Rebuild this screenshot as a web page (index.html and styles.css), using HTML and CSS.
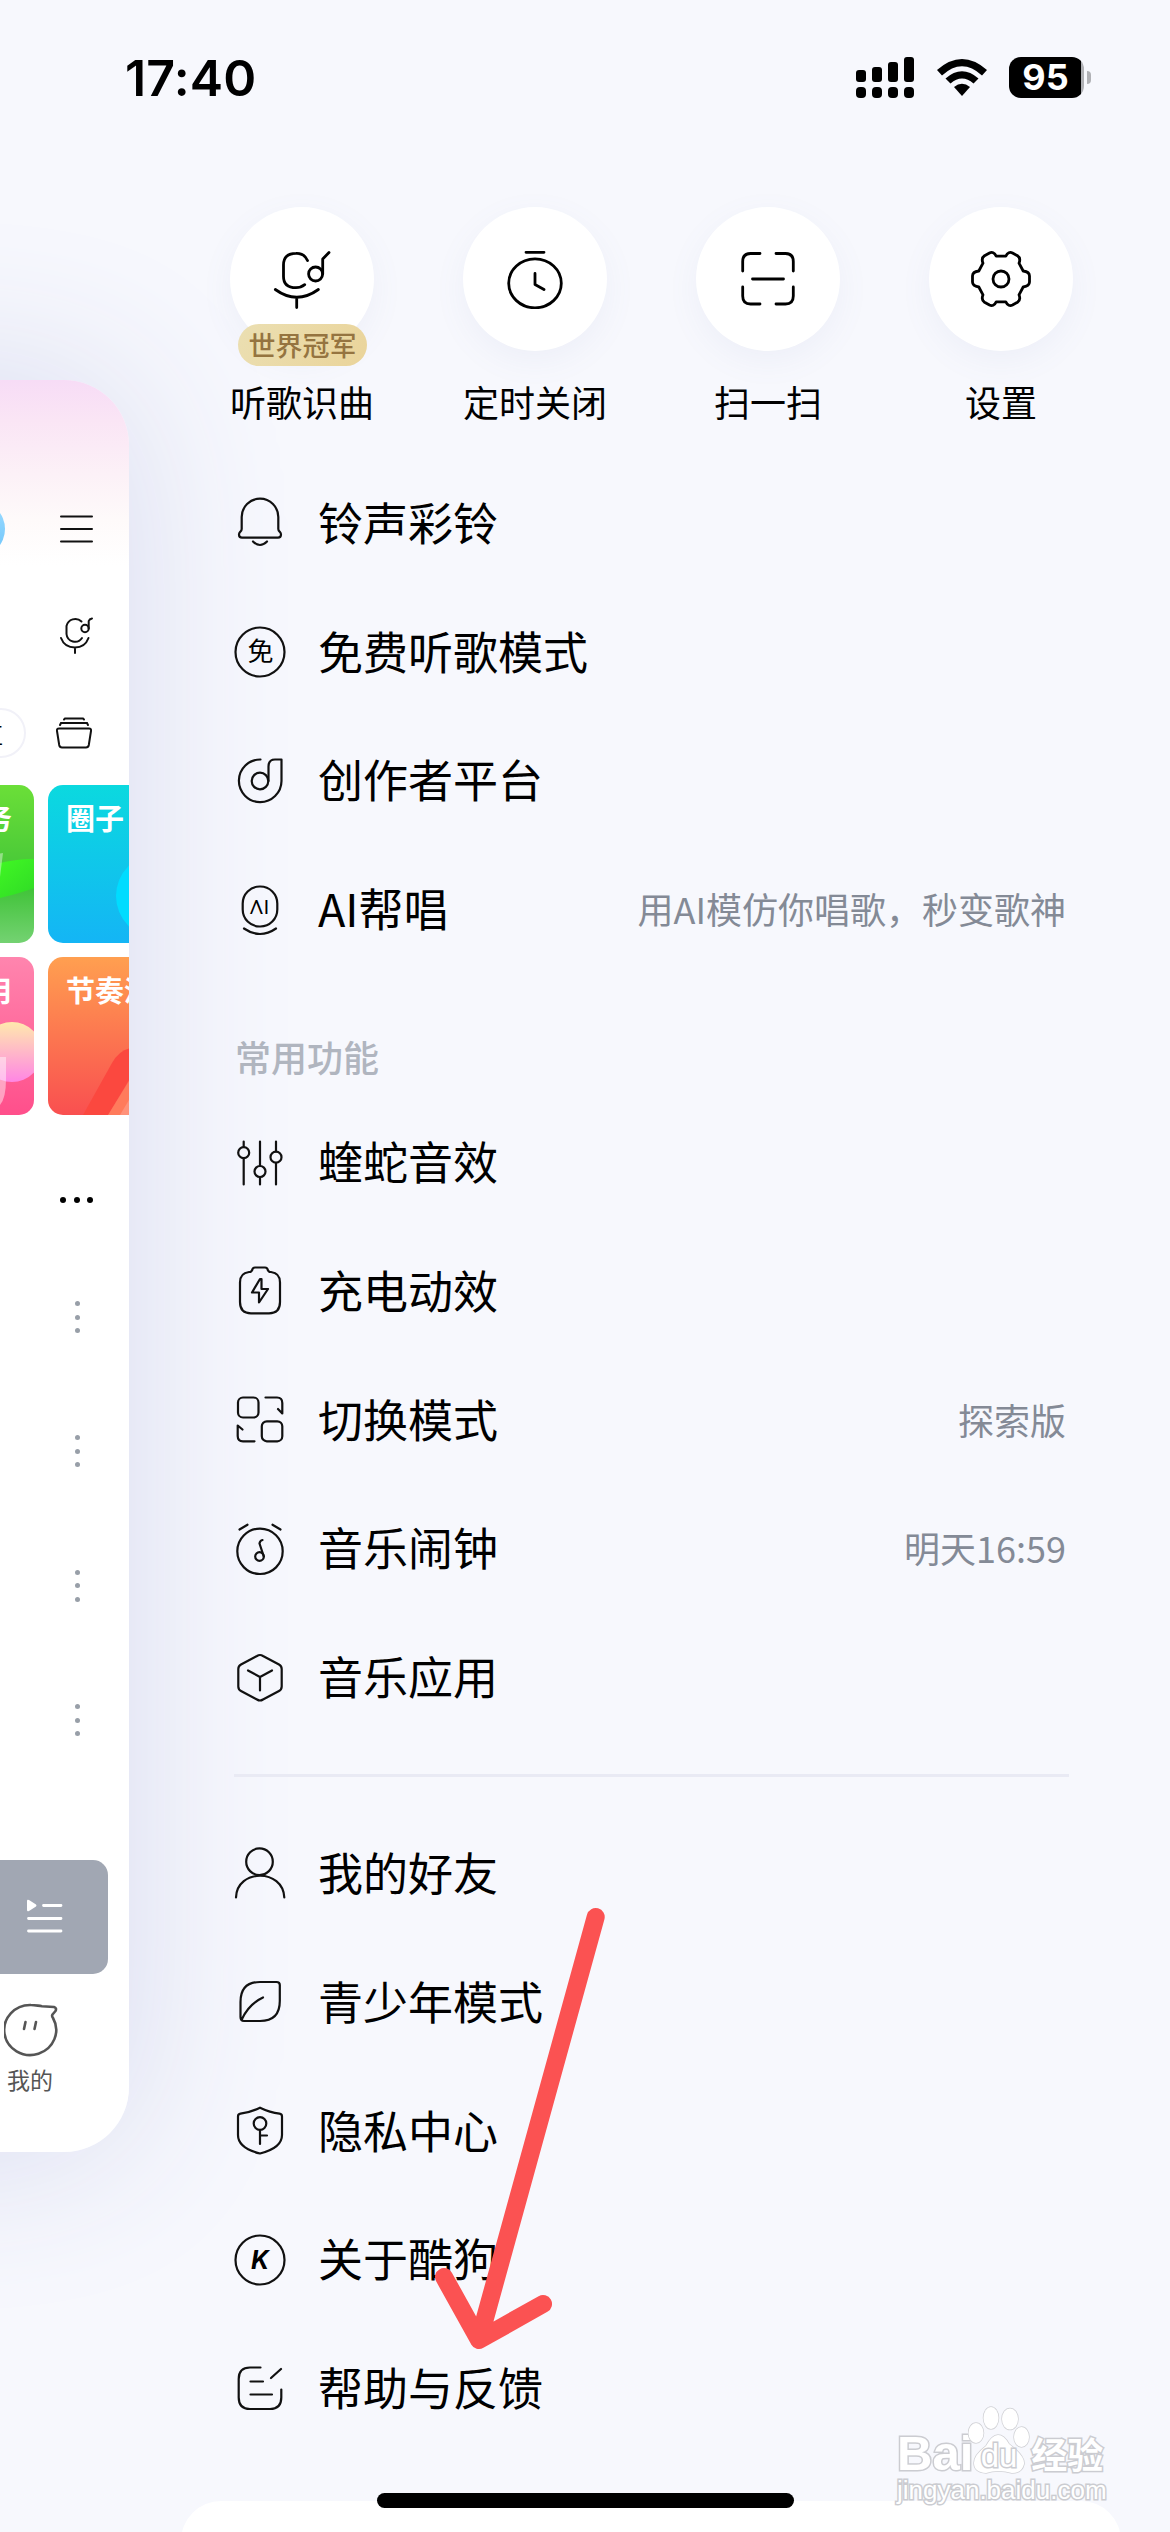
FILE: index.html
```html
<!DOCTYPE html>
<html lang="zh-CN">
<head>
    <meta charset="UTF-8">
    <meta name="viewport" content="width=device-width, initial-scale=1.0">
    <title>酷狗音乐</title>
    <link rel="stylesheet" href="styles.css">
</head>
<body>

    <div class="status-bar">
        <span class="time">17:40</span>
        <div class="status-icons">
            <svg width="58" height="41" viewBox="0 0 58 41">
                <rect x="0" y="13" width="10" height="12" rx="3"/>
                <rect x="16" y="10" width="10" height="15" rx="3"/>
                <rect x="32" y="5" width="10" height="20" rx="3"/>
                <rect x="48" y="0" width="10" height="25" rx="3"/>
                <rect x="0" y="30" width="10" height="11" rx="4"/>
                <rect x="16" y="30" width="10" height="11" rx="4"/>
                <rect x="32" y="30" width="10" height="11" rx="4"/>
                <rect x="48" y="30" width="10" height="11" rx="4"/>
            </svg>
            <svg class="wifi" width="52" height="38" viewBox="0 0 52 38">
                <path d="M1 11 Q26 -11 51 11 L46 16.5 Q26 -2 6 16.5 Z"/>
                <path d="M9.5 19.5 Q26 5 42.5 19.5 L37.5 24.5 Q26 14.5 14.5 24.5 Z"/>
                <path d="M18 28 Q26 21.5 34 28 L26 37 Z"/>
            </svg>
            <div class="battery"><span>95</span></div>
            <div class="battery-cap"></div>
        </div>
    </div>

    <div class="screen">
        <!-- main page pushed to the left -->
        <div class="page">
            <div class="page-header">
                <div class="avatar"></div>
                <svg width="34" height="28" viewBox="0 0 34 28" class="line">
                    <path d="M1 1.5H32 M1 14H32 M1 26.5H32"/>
                </svg>
            </div>
            <div class="page-search">
                <svg width="36" height="40" viewBox="0 0 36 40" class="line">
                    <path d="M23.5 6.5 A9 9 0 0 0 8.5 11 V19 A8.5 8.5 0 0 0 24 23"/>
                    <circle cx="27" cy="13.5" r="3.7"/>
                    <path d="M30.7 13.5 V6 Q31.5 4 34 3.5"/>
                    <path d="M3 23 Q6.5 32.5 17 32.5 Q27 32.5 30.5 23 M17 32.5 V38"/>
                </svg>
            </div>
            <div class="page-tabs">
                <div class="pill">区</div>
                <svg width="38" height="34" viewBox="0 0 38 34" class="line">
                    <path d="M9 3.5 L10 2.5 H28 L29 3.5 M5 9 L6 7 H32 L33 9"/>
                    <path d="M4 12.5 H34 Q36.5 12.5 36 15 L33.8 29 Q33.3 31.5 31 31.5 H7 Q4.7 31.5 4.2 29 L2 15 Q1.5 12.5 4 12.5 Z"/>
                </svg>
            </div>
            <div class="tiles">
                <div class="tile green">
                    <span>任务</span>
                    <svg viewBox="0 0 186 158">
                        <defs>
                            <linearGradient id="leaf" x1="0" y1="0" x2="1" y2="1">
                                <stop offset="0" stop-color="#4f2"/>
                                <stop offset="1" stop-color="#2fd827"/>
                            </linearGradient>
                        </defs>
                        <path fill="url(#leaf)" d="M130 84 Q166 73 186 74 V103 Q168 110 130 118 Z"/>
                        <path fill="#fff" opacity=".4" d="M125 74 L155 68 L152 92 L125 105 Z"/>
                    </svg>
                </div>
                <div class="tile blue">
                    <span>圈子</span>
                    <svg viewBox="0 0 186 158"><circle cx="110" cy="111" r="42" fill="#00dcff"/></svg>
                </div>
                <div class="tile pink">
                    <span>专用</span>
                    <svg viewBox="0 0 186 158">
                        <defs>
                            <linearGradient id="ball" x1="0" y1="0" x2="0" y2="1">
                                <stop offset="0" stop-color="#ffe9ad"/>
                                <stop offset="1" stop-color="#ff86e4"/>
                            </linearGradient>
                        </defs>
                        <circle cx="164" cy="95" r="30" fill="url(#ball)"/>
                        <path fill="#fff" opacity=".45" d="M120 100 H158 V122 Q158 144 150 150 H120 Z"/>
                    </svg>
                </div>
                <div class="tile orange">
                    <span>节奏派</span>
                    <svg viewBox="0 0 186 158">
                        <path fill="#fb483f" d="M35 158 L64 106 Q72 92 84 91 V118 L60 158 Z"/>
                        <path fill="#ff7b5c" d="M60 158 L84 119 V158 Z"/>
                        <path fill="#ff927a" d="M72 158 L84 138 V158 Z"/>
                    </svg>
                </div>
            </div>
            <div class="more"><i></i><i></i><i></i></div>
            <div class="songs">
                <div class="dots"><i></i><i></i><i></i></div>
                <div class="dots"><i></i><i></i><i></i></div>
                <div class="dots"><i></i><i></i><i></i></div>
                <div class="dots"><i></i><i></i><i></i></div>
            </div>
            <div class="player">
                <svg width="36" height="36" viewBox="0 0 36 36">
                    <path fill="#fff" d="M0 2 Q0 0 2 1 L9 5.5 Q10 6.5 9 7.5 L2 12 Q0 13 0 11 Z"/>
                    <path stroke="#fff" stroke-width="2.8" stroke-linecap="round" d="M16.5 6.5 H34 M1.5 19.5 H34 M1.5 32 H34"/>
                </svg>
            </div>
            <div class="mine">
                <svg width="56" height="54" viewBox="0 0 56 54">
                    <path d="M27 2 C31 2 34 2.8 38 3.2 L50 4 Q53 5 51.5 8 L48.5 11.5 Q47.5 13 49 15 A26 25 0 1 1 27 2 Z"/>
                    <path d="M21.5 19 L20 26 M32 19 L30.5 26"/>
                </svg>
                <span>我的</span>
            </div>
        </div>

        <!-- side drawer -->
        <div class="drawer">
            <div class="quick">
                <div class="quick-item">
                    <div class="circle">
                        <svg viewBox="-30 -30 60 60">
                            <path d="M5.5 -18.5 A12 12 0 0 0 -6 -25.7 Q-18.5 -25.7 -18.5 -14 V-2.5 Q-18.5 8.7 -6 8.7 Q-1 8.7 2.7 5.7"/>
                            <circle cx="13.6" cy="-5" r="7"/>
                            <path d="M20.7 -5 V-20 L27 -26.5"/>
                            <path d="M-26.7 10.5 Q-5.3 26 16.4 10.5 M-5.3 18.5 V28.5"/>
                        </svg>
                        <span class="badge">世界冠军</span>
                    </div>
                    <span>听歌识曲</span>
                </div>
                <div class="quick-item">
                    <div class="circle">
                        <svg viewBox="-30 -30 60 60">
                            <ellipse cy="4.3" rx="26.3" ry="24.5"/>
                            <path d="M-9 -26.7 H9 M0 -5.5 V5.5 L9 10.5"/>
                        </svg>
                    </div>
                    <span>定时关闭</span>
                </div>
                <div class="quick-item">
                    <div class="circle">
                        <svg viewBox="-30 -30 60 60">
                            <path d="M-25.3 -8 V-17.5 Q-25.3 -25.5 -17.5 -25.5 H-8 M8 -25.5 H17.5 Q25.3 -25.5 25.3 -17.5 V-8 M25.3 8 V17 Q25.3 25 17.5 25 H8 M-8 25 H-17.5 Q-25.3 25 -25.3 17 V8 M-15.5 0 H15.5"/>
                        </svg>
                    </div>
                    <span>扫一扫</span>
                </div>
                <div class="quick-item">
                    <div class="circle">
                        <svg viewBox="-30 -30 60 60">
                            <path d="M-4.8 -22.9 H4.8 C6.5 -26.5 9 -27.3 11.5 -26 L16.5 -23.2 C19.5 -21.3 19.3 -19 18 -15.8 L22.2 -8 C26.5 -7.4 28.5 -6 28.5 -3 V3 C28.5 6 26.5 7.4 22.2 8 L18 15.8 C19.3 19 19.5 21.3 16.5 23.2 L11.5 26 C9 27.3 6.5 26.5 4.8 22.9 H-4.8 C-6.5 26.5 -9 27.3 -11.5 26 L-16.5 23.2 C-19.5 21.3 -19.3 19 -18 15.8 L-22.2 8 C-26.5 7.4 -28.5 6 -28.5 3 V-3 C-28.5 -6 -26.5 -7.4 -22.2 -8 L-18 -15.8 C-19.3 -19 -19.5 -21.3 -16.5 -23.2 L-11.5 -26 C-9 -27.3 -6.5 -26.5 -4.8 -22.9 Z"/>
                            <circle r="8"/>
                        </svg>
                    </div>
                    <span>设置</span>
                </div>
            </div>

            <div class="menu">
                <div class="row">
                    <svg viewBox="-28 -28 56 56">
                        <path d="M-18.3 6 V-6 A18.3 18.3 0 0 1 18.3 -6 V6 Q18.3 7.5 19.8 8.8 Q21 10 21 11.5 Q21 14.7 18 14.7 H-18 Q-21 14.7 -21 11.5 Q-21 10 -19.8 8.8 Q-18.3 7.5 -18.3 6 Z M-7 18.5 Q0 25.5 7 18.5"/>
                    </svg>
                    <span>铃声彩铃</span>
                </div>
                <div class="row">
                    <svg viewBox="-28 -28 56 56">
                        <circle r="24.5"/>
                        <text class="icon-text" x="0.5" y="9">免</text>
                    </svg>
                    <span>免费听歌模式</span>
                </div>
                <div class="row">
                    <svg viewBox="-28 -28 56 56">
                        <path d="M0.5 -21.5 A21.3 21.3 0 1 0 21.5 0 V-21.5 H15 Q8.5 -21.5 8.5 -14.5 V0"/>
                        <circle r="8.3"/>
                    </svg>
                    <span>创作者平台</span>
                </div>
                <div class="row">
                    <svg viewBox="-28 -28 56 56">
                        <rect x="-17.3" y="-23.5" width="34.6" height="40" rx="17"/>
                        <text class="icon-text ai" x="0" y="3.5">ΛI</text>
                        <path d="M-16 18.5 Q0 29.5 16 18.5"/>
                    </svg>
                    <span>AI帮唱</span>
                    <em>用AI模仿你唱歌，秒变歌神</em>
                </div>
            </div>

            <div class="section-title">常用功能</div>

            <div class="menu">
                <div class="row">
                    <svg viewBox="-28 -28 56 56">
                        <path d="M-16.3 -21.5 V-16 M-16.3 -4.5 V21.5 M0 -21.5 V3 M0 14 V21.5 M16 -21.5 V-11.5 M16 0 V21.5"/>
                        <circle cx="-16.3" cy="-10.3" r="5.5"/>
                        <circle cx="0" cy="8.5" r="5.5"/>
                        <circle cx="16" cy="-5.8" r="5.5"/>
                    </svg>
                    <span>蝰蛇音效</span>
                </div>
                <div class="row">
                    <svg viewBox="-28 -28 56 56">
                        <path d="M-8 -20.5 Q-7.5 -23.5 -5 -23.5 H5 Q7.5 -23.5 8 -20.5 L9.5 -19 H11 Q20 -18 20 -8.5 V11 Q20 22.3 9 22.3 H-9 Q-20 22.3 -20 11 V-8.5 Q-20 -18 -11 -19 H-9.5 Z"/>
                        <path d="M0 -12 L-8 1.5 H-1 V11.5 L8 -2 H1.5 V-12 Z"/>
                    </svg>
                    <span>充电动效</span>
                </div>
                <div class="row">
                    <svg viewBox="-28 -28 56 56">
                        <rect x="-22" y="-22.5" width="20.5" height="20" rx="5"/>
                        <rect x="1.8" y="1.3" width="20.5" height="20" rx="5"/>
                        <path d="M5.5 -22.5 H17 Q22.3 -22.5 22.3 -17 V-6.5 L18 -11 M-5.5 21.3 H-17 Q-22.3 21.3 -22.3 16 V5.5 L-17.5 9.5"/>
                    </svg>
                    <span>切换模式</span>
                    <em>探索版</em>
                </div>
                <div class="row">
                    <svg viewBox="-28 -28 56 56">
                        <circle cy="2.3" r="22.7"/>
                        <path d="M-20.5 -19.5 L-12.5 -24.3 M20.5 -19.5 L12.5 -24.3 M3.8 7.5 L-0.5 -5.5 Q0 -8.5 2.5 -9"/>
                        <circle cx="-0.5" cy="7.5" r="4.3"/>
                    </svg>
                    <span>音乐闹钟</span>
                    <em>明天16:59</em>
                </div>
                <div class="row">
                    <svg viewBox="-28 -28 56 56">
                        <path d="M-3 -22 Q0 -24 3 -22 L19 -13.5 Q21.7 -12 21.7 -9 V8.5 Q21.7 11.5 19 13 L3 21.5 Q0 23.5 -3 21.5 L-19 13 Q-21.7 11.5 -21.7 8.5 V-9 Q-21.7 -12 -19 -13.5 Z"/>
                        <path d="M-12 -7.5 L0 -1 L12 -7.5 M0 -1 V12.5"/>
                    </svg>
                    <span>音乐应用</span>
                </div>
            </div>

            <div class="divider"></div>

            <div class="menu">
                <div class="row">
                    <svg viewBox="-28 -28 56 56">
                        <circle cx="-0.5" cy="-12.3" r="13.3"/>
                        <path d="M-24 23.5 C-23 -5.5 23 -5.5 24.3 23.5"/>
                    </svg>
                    <span>我的好友</span>
                </div>
                <div class="row">
                    <svg viewBox="-28 -28 56 56">
                        <path d="M-19.5 15 V0 Q-19.5 -20 0 -20 H16.5 Q19.8 -20 19.8 -17 V-1 Q19.8 19 0 19 H-16 Q-19.5 19 -19.5 15 Z M-18 17 Q-11 2 3 -4.5"/>
                    </svg>
                    <span>青少年模式</span>
                </div>
                <div class="row">
                    <svg viewBox="-28 -28 56 56">
                        <path d="M0 -23.3 Q10 -18.5 19.5 -17.3 Q22 -17 22 -14.5 V4 Q22 17 0 22.5 Q-22 17 -22 4 V-14.5 Q-22 -17 -19.5 -17.3 Q-10 -18.5 0 -23.3 Z"/>
                        <circle cy="-7.5" r="6.3"/>
                        <path d="M0 -1 V13 M0 4.5 H7"/>
                    </svg>
                    <span>隐私中心</span>
                </div>
                <div class="row">
                    <svg viewBox="-28 -28 56 56">
                        <circle r="24.5"/>
                        <text class="icon-text k" x="0" y="9">K</text>
                    </svg>
                    <span>关于酷狗</span>
                </div>
                <div class="row">
                    <svg viewBox="-28 -28 56 56">
                        <path d="M0.5 -21.5 H-10 Q-21.3 -21.5 -21.3 -10 V8.5 Q-21.3 20 -10 20 H10 Q21.3 20 21.3 8.5 V0.5 M11 -11 L21 -20 M-9.5 -7.5 H3 M-9.5 5.5 H12"/>
                    </svg>
                    <span>帮助与反馈</span>
                </div>
            </div>
        </div>
    </div>

    <div class="bottom-card"></div>
    <div class="home-indicator"></div>

    <svg class="arrow" viewBox="430 1900 180 460">
        <path d="M595.7 1917 L479 2340 M444 2277 L479 2340 L543 2304"/>
    </svg>

    <div class="watermark">
        <div class="wm-logo">
            <span>Bai</span>
            <svg width="62" height="68" viewBox="0 0 62 68">
                <ellipse cx="8" cy="27" rx="7.5" ry="10"/>
                <ellipse cx="23" cy="12" rx="7.5" ry="11"/>
                <ellipse cx="42" cy="13" rx="8" ry="10.5"/>
                <ellipse cx="53.5" cy="31" rx="7.5" ry="10"/>
                <path d="M30 29 Q36 29 41 38 Q57 50 56 58 Q54 67 44 67 Q30 63 18 67 Q6 66 6 57 Q6 49 18 40 Q24 29 30 29 Z"/>
                <text x="31" y="61">du</text>
            </svg>
            <span class="cn">经验</span>
        </div>
        <div class="wm-url">jingyan.baidu.com</div>
    </div>

</body>
</html>
```

FILE: styles.css
```css
body {
    margin: 0;
    width: 1170px;
    height: 2532px;
    position: relative;
    overflow: hidden;
    background-color: #f7f8fd;
    font-family: "Noto Sans CJK SC", sans-serif;
    color: #000;
}

svg {
    display: block;
    flex-shrink: 0;
}

/* status bar */
.status-bar {
    display: flex;
    justify-content: space-between;
    align-items: center;
    box-sizing: border-box;
    height: 155px;
    padding: 0 79px 0 125px;
}

.time {
    font-family: Inter, sans-serif;
    font-size: 50px;
    font-weight: 600;
    letter-spacing: 0.2px;
}

.status-icons {
    display: flex;
    align-items: center;
}

.wifi {
    margin: 0 21px 0 22px;
}

.battery {
    width: 75px;
    height: 41px;
    border-radius: 12px;
    background: linear-gradient(to right, #000 72px, #b0b1b5 72px);
    color: #fff;
    font-family: Inter, sans-serif;
    font-size: 36px;
    font-weight: 700;
    line-height: 41px;
    text-align: center;
}

.battery span {
    margin-right: 2px;
}

.battery-cap {
    width: 4px;
    height: 13px;
    margin-left: 3px;
    border-radius: 0 4px 4px 0;
    background: #b0b1b5;
}

.screen {
    display: flex;
    align-items: flex-start;
}

/* main page, only its right edge stays on screen */
.page {
    box-sizing: border-box;
    width: 829px;
    height: 1772px;
    flex-shrink: 0;
    margin: 225px 0 0 -700px;
    padding-left: 700px;
    border-radius: 65px;
    overflow: hidden;
    background: linear-gradient(#f7dcf6 0, #fae5f5 40px, #fcf1f7 95px, #fefafa 140px, #fff 185px);
    box-shadow: 0 0 170px #d7daef;
}

.line path,
.line circle {
    fill: none;
    stroke: #111;
    stroke-width: 2;
    stroke-linecap: round;
}

.page-header {
    display: flex;
    justify-content: space-between;
    align-items: center;
    height: 56px;
    margin-top: 121px;
    padding-right: 35px;
}

.avatar {
    width: 56px;
    height: 56px;
    margin-left: -51px;
    border-radius: 50%;
    background: linear-gradient(#9edcff, #6cc4fb);
}

.page-search {
    display: flex;
    justify-content: flex-end;
    margin-top: 58px;
    padding-right: 35px;
}

.page-tabs {
    display: flex;
    justify-content: space-between;
    align-items: center;
    margin-top: 53px;
    padding-right: 36px;
}

.pill {
    box-sizing: border-box;
    width: 88px;
    height: 50px;
    margin-left: -62px;
    padding-right: 21px;
    border: 2px solid #f1f1f8;
    border-radius: 25px;
    font-size: 22px;
    line-height: 46px;
    text-align: right;
}

.tiles {
    display: grid;
    grid-template-columns: 186px 186px;
    grid-auto-rows: 158px;
    gap: 14px;
    margin: 27px 0 0 -152px;
}

.tile {
    display: grid;
    border-radius: 15px;
    overflow: hidden;
    color: #fff;
    font-size: 29px;
    font-weight: 700;
    line-height: 40px;
}

.tile span,
.tile svg {
    grid-area: 1 / 1;
}

.tile span {
    z-index: 1;
    padding: 12px 0 0 18px;
    white-space: nowrap;
}

.tile svg {
    width: 186px;
    height: 158px;
}

.green {
    background: linear-gradient(#6bdf38, #40c338 65%, #74d272);
}

.green span,
.pink span {
    padding-right: 22px;
    text-align: right;
}

.blue {
    background: linear-gradient(#0bd9df, #14b5f5);
}

.pink {
    background: linear-gradient(#ff85ae, #ff4f8b);
}

.orange {
    background: linear-gradient(#ff9f50, #f94f50);
}

.more {
    display: flex;
    justify-content: flex-end;
    gap: 7.5px;
    margin-top: 82px;
    padding-right: 36px;
}

.more i {
    width: 6px;
    height: 6px;
    border-radius: 50%;
    background: #000;
}

.songs {
    display: flex;
    flex-direction: column;
    align-items: flex-end;
    gap: 102.4px;
    margin-top: 98px;
    padding-right: 49px;
}

.dots {
    display: flex;
    flex-direction: column;
    gap: 8.5px;
    height: 32px;
}

.dots i {
    width: 5px;
    height: 5px;
    flex-shrink: 0;
    border-radius: 50%;
    background: #989fa8;
}

.player {
    display: flex;
    justify-content: flex-end;
    align-items: center;
    box-sizing: border-box;
    width: 208px;
    height: 114px;
    margin: 124px 0 0 -100px;
    padding-right: 45px;
    border-radius: 15px;
    background: #a1a7b3;
}

.mine {
    display: flex;
    flex-direction: column;
    width: 60px;
    margin-top: 29px;
    padding-left: 4px;
    color: #555;
    font-size: 23px;
    line-height: 34px;
}

.mine path {
    fill: none;
    stroke: #555;
    stroke-width: 2.6;
    stroke-linecap: round;
    stroke-linejoin: round;
}

.mine span {
    margin: 5px 0 0 3px;
}

/* drawer */
.drawer {
    width: 942px;
    margin-left: 55px;
    padding-top: 52px;
    position: relative;
}

.quick {
    display: flex;
    gap: 33px;
    margin-left: 18px;
}

.quick-item {
    display: flex;
    flex-direction: column;
    align-items: center;
    width: 200px;
    font-size: 36px;
    line-height: 52px;
}

.circle {
    display: flex;
    justify-content: center;
    align-items: center;
    position: relative;
    width: 144px;
    height: 144px;
    margin-bottom: 24px;
    border-radius: 50%;
    background: #fff;
    box-shadow: 0 10px 32px rgba(120, 125, 190, 0.07);
}

.circle svg {
    width: 60px;
    height: 60px;
}

.circle svg path,
.circle svg circle,
.circle svg ellipse {
    fill: none;
    stroke: #000;
    stroke-width: 2.8;
    stroke-linecap: round;
    stroke-linejoin: round;
}

.badge {
    position: absolute;
    left: 8px;
    top: 117px;
    width: 129px;
    height: 42px;
    border-radius: 21px;
    background: linear-gradient(120deg, #ebdfb2, #ead49a);
    color: #957440;
    font-size: 27px;
    font-weight: 500;
    line-height: 41px;
    text-align: center;
    white-space: nowrap;
}

.menu {
    margin-left: 48px;
}

.quick + .menu {
    margin-top: 32px;
}

.row {
    display: flex;
    align-items: center;
    height: 128.8px;
    padding-right: 60px;
    font-size: 45px;
    line-height: 64px;
}

.row span,
.row em {
    padding-bottom: 3px;
}

.row svg {
    width: 56px;
    height: 56px;
    margin-right: 30px;
}

.row svg path,
.row svg circle,
.row svg rect {
    fill: none;
    stroke: #111;
    stroke-width: 2.2;
    stroke-linecap: round;
    stroke-linejoin: round;
}

.row em {
    margin-left: auto;
    color: #848a96;
    font-size: 36px;
    font-style: normal;
}

.icon-text {
    font-size: 26px;
    text-anchor: middle;
}

.ai {
    font-family: Lato, sans-serif;
    font-size: 19px;
    letter-spacing: 1px;
}

.k {
    font-family: Inter, sans-serif;
    font-size: 25px;
    font-style: italic;
    font-weight: 700;
}

.section-title {
    height: 62px;
    margin: 52px 0 10px 51px;
    color: #b0b5bf;
    font-size: 36px;
    font-weight: 500;
    line-height: 60px;
}

.divider {
    width: 835px;
    height: 3px;
    margin: 32px 0 32px 50px;
    background: #e9eaf4;
}

.bottom-card {
    position: absolute;
    left: 181px;
    top: 2501px;
    width: 940px;
    height: 80px;
    border-radius: 42px;
    background: #fff;
}

.home-indicator {
    position: absolute;
    left: 377px;
    top: 2493px;
    width: 417px;
    height: 15px;
    border-radius: 8px;
    background: #000;
}

.arrow {
    position: absolute;
    left: 430px;
    top: 1900px;
    width: 180px;
    height: 460px;
}

.arrow path {
    fill: none;
    stroke: #fb5252;
    stroke-width: 18;
    stroke-linecap: round;
    stroke-linejoin: round;
}

/* watermark */
.watermark {
    position: absolute;
    left: 897px;
    top: 2406px;
    width: 212px;
    color: #fff;
    -webkit-text-stroke: 3px #cbccd1;
    paint-order: stroke fill;
}

.wm-logo {
    display: flex;
    align-items: flex-end;
    height: 68px;
    font-family: "Liberation Sans", sans-serif;
    font-size: 49px;
    font-weight: 700;
    line-height: 42px;
}

.wm-logo svg {
    margin: 0 1px 0 -5px;
}

.wm-logo ellipse,
.wm-logo path {
    fill: #fff;
    stroke: #d0d1d5;
    stroke-width: 1.5;
}

.wm-logo text {
    fill: #fff;
    stroke: #cbccd1;
    stroke-width: 3;
    font-size: 33px;
    font-weight: 400;
    text-anchor: middle;
}

.wm-logo .cn {
    font-family: "Noto Sans CJK SC", sans-serif;
    font-size: 36px;
    line-height: 42px;
}

.wm-url {
    margin-top: 1px;
    font-family: "Liberation Sans", sans-serif;
    font-size: 26px;
    line-height: 30px;
    white-space: nowrap;
}
```
